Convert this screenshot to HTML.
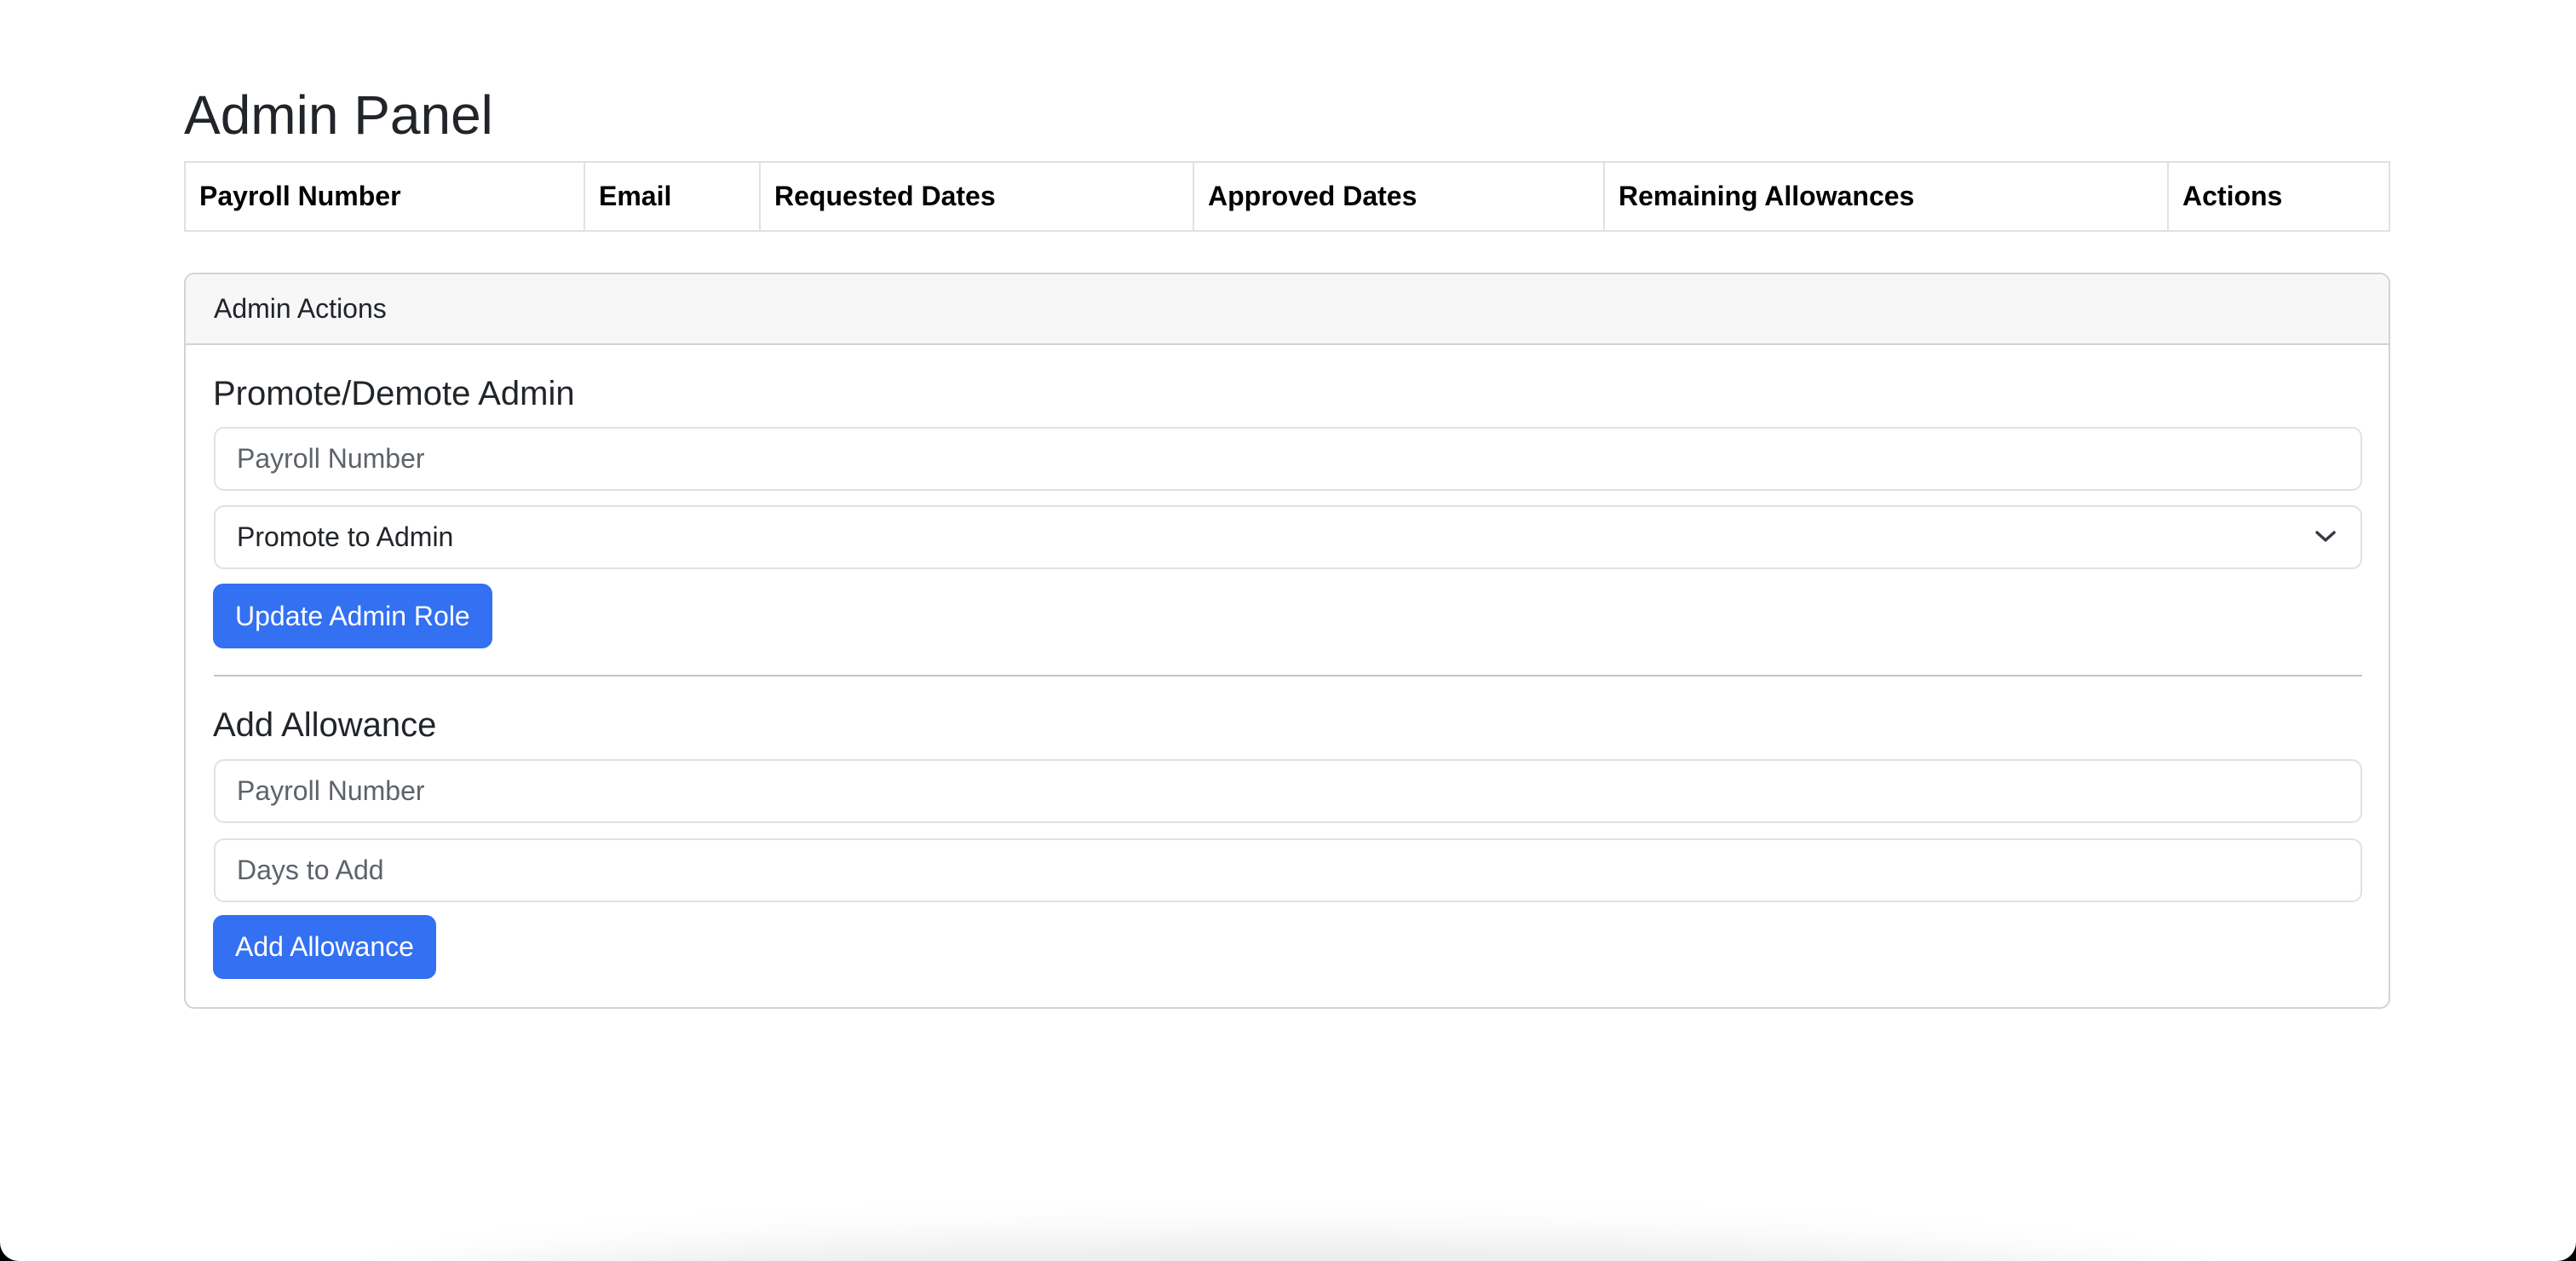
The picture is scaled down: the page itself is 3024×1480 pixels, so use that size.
<!DOCTYPE html>
<html><head><meta charset="utf-8"><style>
*{box-sizing:border-box;margin:0;padding:0}
html,body{width:3024px;height:1480px;overflow:hidden;background:#000}
.page{position:absolute;left:0;top:0;width:3024px;height:1480px;background:#fff;border-radius:0 0 22px 22px;overflow:hidden;font-family:"Liberation Sans",Arial,sans-serif;color:#212529}
.abs{position:absolute}
h2{position:absolute;left:216px;top:97px;font-size:64px;font-weight:400;line-height:76px}
table{position:absolute;left:216px;top:189px;width:2590px;height:83px;border-collapse:collapse;table-layout:fixed}
th{border:2px solid #dee2e6;text-align:left;font-size:32px;font-weight:700;color:#000;padding:0 0 0 16px;white-space:nowrap;overflow:hidden}
.card{left:216px;top:320px;width:2590px;height:864px;border:2px solid #d3d3d3;border-radius:12px;overflow:hidden}
.ch{height:83px;background:#f7f7f7;border-bottom:2px solid #d3d3d3;font-size:32px;line-height:81px;padding-left:33px;color:#212529}
.h4{font-size:40px;font-weight:400}
.inp{left:251px;width:2522px;height:75px;border:2px solid #dee2e6;border-radius:12px;font-size:32px;line-height:71px;padding-left:25px;color:#5c636a}
.btn{left:250px;height:76px;background:#3370f2;border-radius:12px;color:#fff;font-size:32px;line-height:76px;padding:0 26px}
.shadow{left:440px;top:1490px;width:2140px;height:100px;border-radius:50%;box-shadow:0 0 60px 30px rgba(0,0,0,.1);background:rgba(0,0,0,.1)}
</style></head><body><div class="page">
<h2>Admin Panel</h2>
<table><tr>
<th style="width:469px">Payroll Number</th>
<th style="width:206px">Email</th>
<th style="width:509px">Requested Dates</th>
<th style="width:482px">Approved Dates</th>
<th style="width:662px">Remaining Allowances</th>
<th>Actions</th>
</tr></table>
<div class="abs card"><div class="ch">Admin Actions</div></div>
<div class="abs h4" style="left:250px;top:440px">Promote/Demote Admin</div>
<div class="abs inp" style="top:501px">Payroll Number</div>
<div class="abs inp" style="top:593px;color:#212529">Promote to Admin
<svg class="abs" style="right:28px;top:26px" width="26" height="18" viewBox="0 0 26 18"><path d="M3 4 L13 13 L23 4" fill="none" stroke="#343a40" stroke-width="3.5" stroke-linecap="round" stroke-linejoin="round"/></svg></div>
<div class="abs btn" style="top:685px">Update Admin Role</div>
<div class="abs" style="left:251px;top:792px;width:2522px;height:2px;background:#c4c4c4"></div>
<div class="abs h4" style="left:250px;top:829px">Add Allowance</div>
<div class="abs inp" style="top:891px">Payroll Number</div>
<div class="abs inp" style="top:984px">Days to Add</div>
<div class="abs btn" style="top:1074px;height:75px;line-height:75px">Add Allowance</div>
<div class="abs shadow"></div>
</div></body></html>
